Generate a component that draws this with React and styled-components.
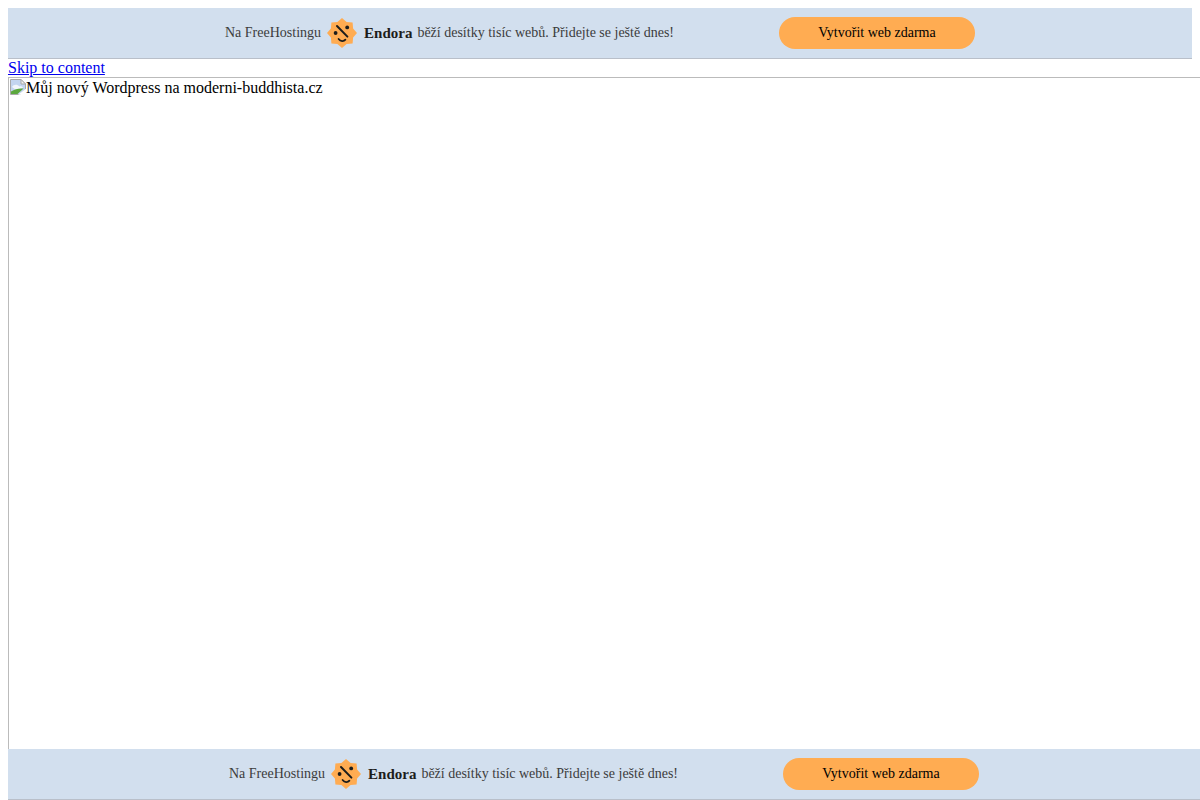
import styled, { createGlobalStyle } from 'styled-components';

const GlobalStyle = createGlobalStyle`
  html, body {
    margin: 0;
    height: 800px;
    overflow: hidden;
    background: #fff;
  }
  body {
    padding: 8px;
    box-sizing: border-box;
    font-family: "Liberation Serif", "Times New Roman", serif;
    font-size: 16px;
    color: #000;
  }
`;

function EndoraLogo() {
  return (
    <LogoSvg viewBox="0 0 30 30" aria-hidden="true">
      <path
        d="M15 0 L19.6 3.9 L25.6 4.4 L26.1 10.4 L30 15 L26.1 19.6 L25.6 25.6 L19.6 26.1 L15 30 L10.4 26.1 L4.4 25.6 L3.9 19.6 L0 15 L3.9 10.4 L4.4 4.4 L10.4 3.9 Z"
        fill="#ffac52"
      />
      <circle cx="8.6" cy="15" r="1.9" fill="#1d1d1b" />
      <circle cx="20.2" cy="9.4" r="1.9" fill="#1d1d1b" />
      <path d="M10 8 L20.4 18.6" stroke="#1d1d1b" strokeWidth="2" strokeLinecap="round" fill="none" />
      <path d="M11.6 21 C13.6 23.6 16.8 23.6 18.4 21.6" stroke="#1d1d1b" strokeWidth="1.8" strokeLinecap="round" fill="none" />
    </LogoSvg>
  );
}

function BrokenImageIcon() {
  return (
    <BrokenSvg viewBox="0 0 16 16" aria-hidden="true">
      <path d="M0.5 0.5 H11 L15.5 5 V10.5 L10 15.5 H0.5 Z" fill="#c3d5f0" stroke="#a8a8a8" />
      <path d="M11 0.5 V5 H15.5 Z" fill="#f1f1f1" stroke="#a8a8a8" />
      <path d="M2 8 C3.5 5.5 7 5 9.5 7.5 C11 7 12.5 7.6 13 9 L6 11 Z" fill="#f2f6fc" />
      <path d="M1 15 V12.6 C5 9.6 10 9 13.6 9.6 L7.5 15 Z" fill="#5ca83e" />
      <path d="M8 15.8 L16 9.8 V15.8 Z" fill="#fff" />
    </BrokenSvg>
  );
}

function AdBanner({ $wide }) {
  return (
    <Banner $wide={$wide}>
      <Promo>
        <PromoText>Na FreeHostingu</PromoText>
        <EndoraLogo />
        <BrandName>Endora</BrandName>
        <PromoText>běží desítky tisíc webů. Přidejte se ještě dnes!</PromoText>
      </Promo>
      <CreateButton>Vytvořit web zdarma</CreateButton>
    </Banner>
  );
}

export default function App() {
  return (
    <>
      <GlobalStyle />
      <AdBanner />
      <SkipLink href="#content">Skip to content</SkipLink>
      <Frame id="content">
        <BrokenImageIcon />
        <AltText>Můj nový Wordpress na moderni-buddhista.cz</AltText>
      </Frame>
      <AdBanner $wide />
    </>
  );
}

const Banner = styled.div`
  box-sizing: border-box;
  display: flex;
  align-items: center;
  justify-content: center;
  gap: 105px;
  width: ${(p) => (p.$wide ? '1192px' : '1184px')};
  height: 51px;
  padding-bottom: 1px;
  background: #d2dfee;
  border-bottom: 1px solid #b9bfc9;
`;

const Promo = styled.div`
  display: flex;
  align-items: center;
`;

const PromoText = styled.span`
  font-size: 14px;
  color: #3c3c3c;
`;

const LogoSvg = styled.svg`
  width: 30px;
  height: 30px;
  margin: 0 7px 0 6px;
  flex-shrink: 0;
`;

const BrandName = styled.strong`
  font-size: 15px;
  padding-top: 2px;
  color: #1d1d1b;
  margin-right: 5px;
`;

const CreateButton = styled.div`
  display: flex;
  align-items: center;
  justify-content: center;
  width: 196px;
  height: 32px;
  border-radius: 16px;
  background: #ffac52;
  color: #000;
  font-size: 14px;
`;

const SkipLink = styled.a`
  display: block;
  width: fit-content;
  height: 18px;
  line-height: 18px;
  color: #00e;
`;

const Frame = styled.div`
  box-sizing: border-box;
  display: flex;
  align-items: flex-start;
  width: 1200px;
  height: 672px;
  padding: 1px;
  border-top: 1px solid #bbb;
  border-left: 1px solid #bbb;
`;

const BrokenSvg = styled.svg`
  width: 16px;
  height: 16px;
  flex-shrink: 0;
`;

const AltText = styled.span`
  line-height: 18px;
`;
